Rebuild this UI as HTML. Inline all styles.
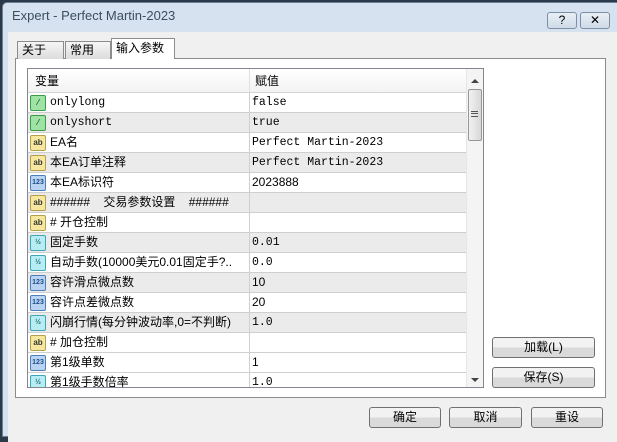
<!DOCTYPE html>
<html><head><meta charset="utf-8"><style>
*{margin:0;padding:0;box-sizing:border-box}
body{width:617px;height:431px;overflow:hidden;background:#2b3a4a;position:relative;font-family:"Liberation Sans","Noto Sans CJK SC",sans-serif;font-size:12px;color:#000}
.abs{position:absolute}
#win{left:2px;top:2px;width:620px;height:435px;background:#d6e2ef;border:1px solid #6d7f94;border-radius:5px 5px 0 0}
#title{left:12px;top:8px;font-size:13px;color:#3c4d5e}
#client{left:8px;top:32px;width:620px;height:410px;background:#f0f0f0}
.tab{top:41px;height:18px;border:1px solid #8c8c8c;border-bottom:none;background:linear-gradient(#f6f6f6,#dcdcdc);padding:0 0 0 4px;line-height:17px;font-size:12px}
#panel{left:15px;top:58px;width:591px;height:340px;background:#fff;border:1px solid #8c8c8c}
#table{left:27px;top:68px;width:457px;height:320px;border:1px solid #828790;background:#fff;overflow:hidden}
.row{position:absolute;left:0;width:438px;height:20px;border-bottom:1px solid #cfcfcf;line-height:19px}
.row.g{background:#ebebeb}
.c1{position:absolute;left:22px;top:0;height:19px;line-height:19px;white-space:nowrap}
.c2{position:absolute;left:221px;top:0;height:19px;line-height:19px;width:217px;border-left:1px solid #cfcfcf;padding:0 0 0 2px;white-space:nowrap}
.mono{font-family:"Liberation Mono","Noto Sans CJK SC",monospace;font-size:11.5px}
.ic{position:absolute;left:2px;top:2px;width:16px;height:16px;border-radius:2px;font-size:8px;font-weight:bold;text-align:center;line-height:14px}
.ab{background:#f5e7a0;border:1px solid #b8a04a;color:#333}
.n{background:#b9d4f2;border:1px solid #4f7fb8;color:#1d4d8a;font-size:7px}
.h{background:#b8ecf3;border:1px solid #3fa6b5;color:#1c6b7a;font-size:7px}
.b{background:#9fe2a6;border:1px solid #3d9a46;color:#1b5e22}
.btn{height:21px;border:1px solid #707070;border-radius:3px;background:linear-gradient(#f2f2f2 50%,#dadada 50%);text-align:center;line-height:19px;font-size:12px}
</style></head><body>
<div id="win" class="abs"></div>
<div id="title" class="abs">Expert - Perfect Martin-2023</div>
<div class="abs btn" style="left:547px;top:12px;width:30px;height:17px;line-height:15px;background:linear-gradient(#e9eff6,#cfdbe8);border-color:#7d8fa5;font-size:12px">?</div>
<div class="abs btn" style="left:580px;top:12px;width:30px;height:17px;line-height:15px;background:linear-gradient(#e9eff6,#cfdbe8);border-color:#7d8fa5;font-size:12px">✕</div>
<div id="client" class="abs"></div>
<div id="panel" class="abs"></div>
<div class="abs tab" style="left:17px;width:47px">关于</div>
<div class="abs tab" style="left:65px;width:46px">常用</div>
<div class="abs tab" style="left:111px;top:38px;height:21px;width:64px;background:#fff;line-height:19px">输入参数</div>
<div id="table" class="abs">
 <div class="row" style="top:0;height:24px;background:linear-gradient(#fff,#f3f3f3);border-bottom:1px solid #d5d5d5"><span class="c1" style="left:7px;height:23px;line-height:24px">变量</span><span class="c2" style="height:23px;line-height:24px;border-left:1px solid #e0e0e0;padding:0 0 0 5px">赋值</span></div>
 <div class="row" style="top:24px"><span class="ic b">⁄</span><span class="c1 mono">onlylong</span><span class="c2 mono">false</span></div>
 <div class="row g" style="top:44px"><span class="ic b">⁄</span><span class="c1 mono">onlyshort</span><span class="c2 mono">true</span></div>
 <div class="row" style="top:64px"><span class="ic ab">ab</span><span class="c1">EA名</span><span class="c2 mono">Perfect Martin-2023</span></div>
 <div class="row g" style="top:84px"><span class="ic ab">ab</span><span class="c1">本EA订单注释</span><span class="c2 mono">Perfect Martin-2023</span></div>
 <div class="row" style="top:104px"><span class="ic n">123</span><span class="c1">本EA标识符</span><span class="c2">2023888</span></div>
 <div class="row g" style="top:124px"><span class="ic ab">ab</span><span class="c1">######&nbsp;&nbsp;&nbsp;&nbsp;交易参数设置&nbsp;&nbsp;&nbsp;&nbsp;######</span><span class="c2"></span></div>
 <div class="row" style="top:144px"><span class="ic ab">ab</span><span class="c1"># 开仓控制</span><span class="c2"></span></div>
 <div class="row g" style="top:164px"><span class="ic h">½</span><span class="c1">固定手数</span><span class="c2 mono">0.01</span></div>
 <div class="row" style="top:184px"><span class="ic h">½</span><span class="c1">自动手数(10000美元0.01固定手?..</span><span class="c2 mono">0.0</span></div>
 <div class="row g" style="top:204px"><span class="ic n">123</span><span class="c1">容许滑点微点数</span><span class="c2">10</span></div>
 <div class="row" style="top:224px"><span class="ic n">123</span><span class="c1">容许点差微点数</span><span class="c2">20</span></div>
 <div class="row g" style="top:244px"><span class="ic h">½</span><span class="c1">闪崩行情(每分钟波动率,0=不判断)</span><span class="c2 mono">1.0</span></div>
 <div class="row" style="top:264px"><span class="ic ab">ab</span><span class="c1"># 加仓控制</span><span class="c2"></span></div>
 <div class="row" style="top:284px"><span class="ic n">123</span><span class="c1">第1级单数</span><span class="c2">1</span></div>
 <div class="row" style="top:304px"><span class="ic h">½</span><span class="c1">第1级手数倍率</span><span class="c2 mono">1.0</span></div>
 <div class="abs" style="left:438px;top:0;width:17px;height:318px;background:#f4f4f4;border-left:1px solid #e6e6e6"></div>
 <div class="abs" style="left:443px;top:10px;width:0;height:0;border-left:4px solid transparent;border-right:4px solid transparent;border-bottom:4px solid #444"></div>
 <div class="abs" style="left:440px;top:20px;width:14px;height:52px;border:1px solid #979797;border-radius:2px;background:linear-gradient(90deg,#f1f1f1,#d8d8d8)"></div>
 <div class="abs" style="left:443px;top:42px;width:7px;height:6px;border-top:1px solid #555;border-bottom:1px solid #555"></div>
 <div class="abs" style="left:443px;top:44px;width:7px;height:1px;background:#555"></div>
 <div class="abs" style="left:443px;top:309px;width:0;height:0;border-left:4px solid transparent;border-right:4px solid transparent;border-top:4px solid #444"></div>
</div>
<div class="abs btn" style="left:492px;top:337px;width:103px">加载(L)</div>
<div class="abs btn" style="left:492px;top:367px;width:103px">保存(S)</div>
<div class="abs btn" style="left:369px;top:407px;width:72px">确定</div>
<div class="abs btn" style="left:449px;top:407px;width:73px">取消</div>
<div class="abs btn" style="left:531px;top:407px;width:72px">重设</div>
</body></html>
